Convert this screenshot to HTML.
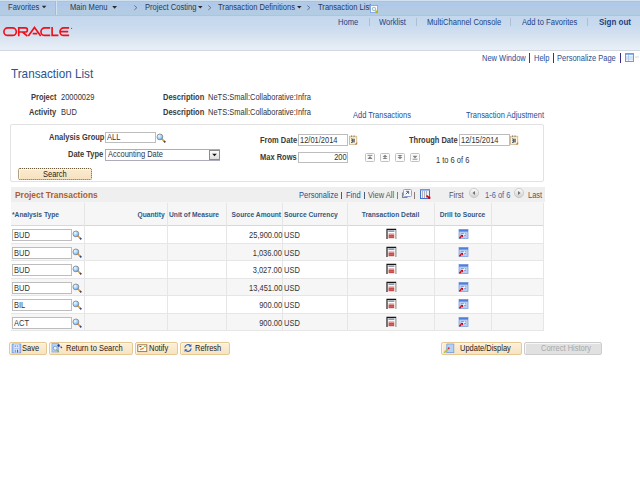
<!DOCTYPE html>
<html><head><meta charset="utf-8">
<style>
*{margin:0;padding:0;box-sizing:border-box}
html,body{width:640px;height:480px;overflow:hidden;background:#fff}
body{position:relative;font-family:"Liberation Sans",sans-serif;font-size:8.2px;color:#333}
.a{position:absolute;white-space:nowrap;line-height:1;transform:scaleX(0.915);transform-origin:0 0}
.ar{transform-origin:100% 0}
.ac{transform-origin:50% 0}
.b{font-weight:bold}
.crumb{color:#2b3a4f;font-size:8.3px}
.hl{color:#1c4384;font-size:8.3px}
.lnk{color:#1d4e98}
.lbl{font-weight:bold;color:#3a3a3a}
.inp{position:absolute;border:1px solid #bdbdbd;background:#fff}
.gl{position:absolute;background:#e6e6e6}
.hd{color:#35577f;font-weight:bold;font-size:7.3px}
.btn{position:absolute;height:13px;border:1px solid #e8c892;background:linear-gradient(#fcefd8,#f7e3c2);border-radius:2px;box-shadow:inset 1px 1px 0 #fff6e6}
.bt{color:#222}
</style></head><body>
<div style="position:absolute;left:0;top:0;width:640px;height:16px;background:linear-gradient(#d0e1ef 0,#d0e1ef 1px,#abc2da 1px,#abc2da 2px,#b4cae4 2px,#b4cae4 4px,#acc9ec 4px,#acc9ec 6px,#b1c9ea 6px,#b1c9ea 8.5px,#b5cbe4 8.5px,#b5cbe4 11px,#b2cce3 11px,#b2cce3 15px,#aac5df 15px)"></div>
<div style="position:absolute;left:0;top:16px;width:640px;height:34px;background:linear-gradient(#c4d7ec 0,#c8daee 9px,#d4e1f0 19px,#dfe8f3 26px,#e9eff7 34px)"></div>
<div style="position:absolute;left:0;top:50px;width:640px;height:1px;background:#d2d8df"></div>
<div style="position:absolute;left:55px;top:1px;width:1px;height:14px;background:#a3bcd6"></div>
<div style="position:absolute;left:56px;top:1px;width:1px;height:14px;background:#d3e2f1"></div>
<div class="a crumb" style="left:8px;top:3px;">Favorites</div>
<div class="a crumb" style="left:70px;top:3px;">Main Menu</div>
<div class="a crumb" style="left:145px;top:3px;">Project Costing</div>
<div class="a crumb" style="left:218px;top:3px;">Transaction Definitions</div>
<div class="a crumb" style="left:318px;top:3px;">Transaction List</div>
<svg style="position:absolute;left:0px;top:0px" width="640" height="15" viewBox="0 0 640 15" ><path d="M41.8 5.7h4.6l-2.3 2.6z M112.2 6h4.8l-2.4 2.7z M198 6h4.6l-2.3 2.6z M297 6h4.6l-2.3 2.6z" fill="#2a2a2a"/><path d="M134.3 5.5l2.6 2.2l-2.6 2.2 M208.3 5.5l2.6 2.2l-2.6 2.2 M307.3 5.5l2.6 2.2l-2.6 2.2" fill="none" stroke="#5b6d8c" stroke-width="0.9"/><rect x="370.5" y="5.5" width="7" height="7" fill="#fff" stroke="#7ea6e6" stroke-width="0.9"/><circle cx="374" cy="9" r="1.8" fill="#e8f2ff" stroke="#8aa" stroke-width="0.8"/><path d="M375.5 10.5l2.2 2.6" stroke="#c8b000" stroke-width="1.6"/></svg>
<svg style="position:absolute;left:0px;top:20px" width="80" height="20" viewBox="0 0 80 20" ><g fill="none" stroke="#f0101c" stroke-width="1.65" transform="translate(0,-20)"><rect x="3.9" y="27.9" width="12.4" height="7.5" rx="3.75"/><path d="M18.75 36.2V27.9h6.6a2.05 2.05 0 0 1 0 4.1h-5.8M22.6 32l4.8 4.1"/><path d="M28.3 36.1l6.2-8.6l6.2 8.6M32.7 33.6h4.6"/><path d="M50.2 27.9h-5.5a3.75 3.75 0 0 0 0 7.5h5.5"/><path d="M52.1 27.1v8.3h6.3"/><path d="M69.1 27.9h-5.4a3.75 3.75 0 0 0 0 7.5h5.4M60.8 31.65h7.4"/></g><circle cx="71.6" cy="8.3" r="0.6" fill="#ee1620"/></svg>
<div class="a hl" style="left:338px;top:18px;">Home</div>
<div class="a hl" style="left:379px;top:18px;">Worklist</div>
<div class="a hl" style="left:427px;top:18px;">MultiChannel Console</div>
<div class="a hl" style="left:522px;top:18px;">Add to Favorites</div>
<div class="a hl b" style="left:599px;top:18px;font-size:8.75px">Sign out</div>
<div style="position:absolute;left:369px;top:18px;width:1px;height:8px;background:#aebfd2"></div>
<div style="position:absolute;left:416px;top:18px;width:1px;height:8px;background:#aebfd2"></div>
<div style="position:absolute;left:510px;top:18px;width:1px;height:8px;background:#aebfd2"></div>
<div style="position:absolute;left:587px;top:18px;width:1px;height:8px;background:#aebfd2"></div>
<div class="a lnk" style="left:482px;top:55px;">New Window</div>
<div class="a lnk" style="left:534px;top:55px;">Help</div>
<div class="a lnk" style="left:557px;top:55px;">Personalize Page</div>
<div style="position:absolute;left:529px;top:53px;width:1px;height:10px;background:#8a2040"></div>
<div style="position:absolute;left:553px;top:53px;width:1px;height:10px;background:#4a2a88"></div>
<div style="position:absolute;left:620px;top:53px;width:1px;height:10px;background:#3a2a88"></div>
<svg style="position:absolute;left:624px;top:52px" width="16" height="11" viewBox="0 0 16 11" ><rect x="1.5" y="1.5" width="8" height="8" fill="#f2f6fd" stroke="#6a9ae3" stroke-width="1"/><rect x="1" y="1" width="9" height="1.8" fill="#6e9de6"/><path d="M2 5h7M2 7h7M4.5 3v6" stroke="#a9c4ee" stroke-width="0.8"/><path d="M11 5h4" stroke="#ccc" stroke-width="0.8"/></svg>
<div class="a " style="left:11px;top:68px;font-size:12.8px;color:#2b5390">Transaction List</div>
<div class="a lbl" style="left:31px;top:94px;">Project</div>
<div class="a " style="left:61px;top:94px;">20000029</div>
<div class="a lbl" style="left:163px;top:94px;">Description</div>
<div class="a " style="left:208px;top:94px;">NeTS:Small:Collaborative:Infra</div>
<div class="a lbl" style="left:29px;top:109px;">Activity</div>
<div class="a " style="left:61px;top:109px;">BUD</div>
<div class="a lbl" style="left:163px;top:109px;">Description</div>
<div class="a " style="left:208px;top:109px;">NeTS:Small:Collaborative:Infra</div>
<div class="a lnk" style="left:353px;top:112px;">Add Transactions</div>
<div class="a lnk" style="left:466px;top:112px;">Transaction Adjustment</div>
<div style="position:absolute;left:10px;top:124px;width:534px;height:58px;border:1px solid #e2e2e2;border-radius:2px"></div>
<div class="a lbl" style="left:49px;top:134px;">Analysis Group</div>
<div class="inp" style="left:105px;top:132px;width:51px;height:11px"></div>
<div class="a " style="left:107px;top:134px;">ALL</div>
<svg style="position:absolute;left:156px;top:133px" width="10" height="10" viewBox="0 0 10 10" ><defs><radialGradient id="mg" cx="0.35" cy="0.35" r="0.7"><stop offset="0" stop-color="#f4faff"/><stop offset="0.6" stop-color="#9fd0f8"/><stop offset="1" stop-color="#5a9fe0"/></radialGradient></defs><path d="M5.8 5.8l3.2 3.2" stroke="#e39a3a" stroke-width="1.7"/><path d="M8 8l1.3 1.3" stroke="#3a4a7a" stroke-width="1.7"/><circle cx="3.9" cy="3.9" r="2.9" fill="url(#mg)" stroke="#858d96" stroke-width="0.9"/></svg>
<div class="a lbl" style="left:68px;top:151px;">Date Type</div>
<div class="inp" style="left:105px;top:149px;width:115px;height:12px;border-color:#acacbc"></div>
<div class="a " style="left:108px;top:151px;">Accounting Date</div>
<svg style="position:absolute;left:209px;top:150px" width="11" height="10" viewBox="0 0 11 10" ><defs><linearGradient id="sg" x1="0" y1="0" x2="0" y2="1"><stop offset="0" stop-color="#fdfdfd"/><stop offset="1" stop-color="#dcdcdc"/></linearGradient></defs><rect x="0.5" y="0.5" width="10" height="9" fill="url(#sg)" stroke="#8c8c8c" stroke-width="1"/><path d="M3.2 3.8h4.6l-2.3 2.4z" fill="#111"/></svg>
<div class="btn" style="left:18px;top:168px;width:74px;height:12px;border:1px dotted #6e5a3c;background:linear-gradient(#fcebd0,#f7e2be)"></div>
<div class="a bt" style="left:43px;top:171px;">Search</div>
<div class="a lbl" style="left:260px;top:137px;">From Date</div>
<div class="inp" style="left:298px;top:134px;width:50px;height:12px"></div>
<div class="a " style="left:300px;top:137px;">12/01/2014</div>
<svg style="position:absolute;left:349px;top:135px" width="9" height="10" viewBox="0 0 9 10" ><rect x="0.5" y="1.3" width="7.2" height="8" fill="#fffbe6" stroke="#cbb58e" stroke-width="0.9"/><rect x="1" y="1.8" width="6.2" height="1.6" fill="#f8eab0"/><path d="M2.1 3.9h1.3v3.6h-1.3M2.3 5.7h1" fill="none" stroke="#3a4050" stroke-width="0.9"/><path d="M5 3.8v3.8" stroke="#1e1e28" stroke-width="1.1"/><path d="M2.6 0.4v1.6M5.1 0.4v1.6" stroke="#7a6a50" stroke-width="0.8"/><path d="M5.6 9.6l2.6-2.6v1.8l-0.8 0.8z" fill="#d46d1e"/></svg>
<div class="a lbl" style="left:260px;top:154px;">Max Rows</div>
<div class="inp" style="left:298px;top:152px;width:50px;height:11px"></div>
<div class="a ar " style="right:293px;top:154px;">200</div>
<div class="a lbl" style="left:409px;top:137px;">Through Date</div>
<div class="inp" style="left:459px;top:134px;width:51px;height:12px"></div>
<div class="a " style="left:461px;top:137px;">12/15/2014</div>
<svg style="position:absolute;left:510px;top:135px" width="9" height="10" viewBox="0 0 9 10" ><rect x="0.5" y="1.3" width="7.2" height="8" fill="#fffbe6" stroke="#cbb58e" stroke-width="0.9"/><rect x="1" y="1.8" width="6.2" height="1.6" fill="#f8eab0"/><path d="M2.1 3.9h1.3v3.6h-1.3M2.3 5.7h1" fill="none" stroke="#3a4050" stroke-width="0.9"/><path d="M5 3.8v3.8" stroke="#1e1e28" stroke-width="1.1"/><path d="M2.6 0.4v1.6M5.1 0.4v1.6" stroke="#7a6a50" stroke-width="0.8"/><path d="M5.6 9.6l2.6-2.6v1.8l-0.8 0.8z" fill="#d46d1e"/></svg>
<svg style="position:absolute;left:365px;top:153px" width="10" height="9" viewBox="0 0 10 9" ><rect x="0.5" y="0.5" width="9" height="8" rx="1" fill="#fbfbfb" stroke="#c2c2c2" stroke-width="1"/><path d="M2.6 2.4h4.8" stroke="#808080" stroke-width="0.9"/><path d="M5 3l2.5 2.9h-5z" fill="#808080"/></svg>
<svg style="position:absolute;left:380px;top:153px" width="10" height="9" viewBox="0 0 10 9" ><rect x="0.5" y="0.5" width="9" height="8" rx="1" fill="#fbfbfb" stroke="#c2c2c2" stroke-width="1"/><path d="M5 1.8l2.5 2.2h-5zM5 3.9l2.5 2.2h-5z" fill="#808080"/></svg>
<svg style="position:absolute;left:395px;top:153px" width="10" height="9" viewBox="0 0 10 9" ><rect x="0.5" y="0.5" width="9" height="8" rx="1" fill="#fbfbfb" stroke="#c2c2c2" stroke-width="1"/><path d="M5 4.1l2.5-2.2h-5zM5 6.2l2.5-2.2h-5z" fill="#808080"/></svg>
<svg style="position:absolute;left:410px;top:153px" width="10" height="9" viewBox="0 0 10 9" ><rect x="0.5" y="0.5" width="9" height="8" rx="1" fill="#fbfbfb" stroke="#c2c2c2" stroke-width="1"/><path d="M5 5.4l2.5-2.7h-5z" fill="#808080"/><path d="M2.6 6.2h4.8" stroke="#808080" stroke-width="0.9"/></svg>
<div class="a " style="left:436px;top:157px;">1 to 6 of 6</div>
<div style="position:absolute;left:11px;top:187px;width:534px;height:15px;background:#efefef"></div>
<div class="a b" style="left:15px;top:191px;color:#ad5f28;font-size:9.2px">Project Transactions</div>
<div class="a lnk" style="left:299px;top:192px;">Personalize</div>
<div style="position:absolute;left:341px;top:192px;width:1px;height:7px;background:#4a5a7a"></div><div style="position:absolute;left:364px;top:192px;width:1px;height:7px;background:#4a5a7a"></div>
<div class="a lnk" style="left:346px;top:192px;">Find</div>
<div class="a " style="left:368px;top:192px;color:#555">View All</div>
<div style="position:absolute;left:397px;top:192px;width:1px;height:7px;background:#8a7a78"></div><div style="position:absolute;left:414px;top:192px;width:1px;height:7px;background:#8a7a78"></div>
<div class="a " style="left:449px;top:192px;color:#555">First</div>
<div class="a " style="left:485px;top:192px;color:#3d68a8">1-6 of 6</div>
<div class="a " style="left:528px;top:192px;color:#555">Last</div>
<svg style="position:absolute;left:401px;top:188px" width="11" height="11" viewBox="0 0 11 11" ><path d="M1.5 4.5v5h5" fill="none" stroke="#7d8796" stroke-width="1.1"/><rect x="2.5" y="1.5" width="8" height="7" rx="1" fill="#f4f7fb" stroke="#8da4c6" stroke-width="1"/><path d="M4.8 6.2l2.6-2.6M5.2 3.4h2.4v2.4" fill="none" stroke="#4a5a72" stroke-width="0.9"/></svg>
<svg style="position:absolute;left:419px;top:188px" width="12" height="12" viewBox="0 0 12 12" ><rect x="1.5" y="1.5" width="9" height="9" fill="#eef1f6" stroke="#3f74d2" stroke-width="1"/><rect x="1" y="1" width="10" height="1.6" fill="#6a98e4"/><path d="M3.5 3v7M5.5 3v7M7.5 3v7" stroke="#aeb3bc" stroke-width="1"/><path d="M7.5 7.6l3.2 2.6" fill="none" stroke="#d00000" stroke-width="1.6"/><path d="M9 10.8h2.4v-2.4z" fill="#d00000"/></svg>
<svg style="position:absolute;left:469px;top:188px" width="10" height="10" viewBox="0 0 10 10" ><defs><linearGradient id="cg" x1="0" y1="0" x2="0" y2="1"><stop offset="0" stop-color="#fdfdfd"/><stop offset="1" stop-color="#d0d0d0"/></linearGradient></defs><circle cx="5" cy="5" r="4.6" fill="url(#cg)" stroke="#c4c4c4" stroke-width="0.8"/><path d="M6 3l-2.5 2l2.5 2z" fill="#707070"/></svg>
<svg style="position:absolute;left:514px;top:188px" width="10" height="10" viewBox="0 0 10 10" ><defs><linearGradient id="cg" x1="0" y1="0" x2="0" y2="1"><stop offset="0" stop-color="#fdfdfd"/><stop offset="1" stop-color="#d0d0d0"/></linearGradient></defs><circle cx="5" cy="5" r="4.6" fill="url(#cg)" stroke="#c4c4c4" stroke-width="0.8"/><path d="M4 3l2.5 2l-2.5 2z" fill="#707070"/></svg>
<div style="position:absolute;left:11px;top:202px;width:533px;height:23px;background:#f6f6f6"></div>
<div class="gl" style="left:11px;top:225px;width:533px;height:1px;background:#d8d8d8"></div>
<div style="position:absolute;left:11px;top:244px;width:533px;height:16px;background:#f6f6f6"></div>
<div style="position:absolute;left:11px;top:279px;width:533px;height:16px;background:#f6f6f6"></div>
<div style="position:absolute;left:11px;top:314px;width:533px;height:16px;background:#f6f6f6"></div>
<!--gridmark-->
<div class="gl" style="left:84px;top:203px;width:1px;height:128px"></div>
<div class="gl" style="left:167px;top:203px;width:1px;height:128px"></div>
<div class="gl" style="left:226px;top:203px;width:1px;height:128px"></div>
<div class="gl" style="left:282px;top:203px;width:1px;height:128px"></div>
<div class="gl" style="left:347px;top:203px;width:1px;height:128px"></div>
<div class="gl" style="left:434px;top:203px;width:1px;height:128px"></div>
<div class="gl" style="left:491px;top:203px;width:1px;height:128px"></div>
<div class="gl" style="left:543px;top:203px;width:1px;height:128px"></div>
<div class="a hd" style="left:12px;top:211px;">*Analysis Type</div>
<div class="a ar hd" style="right:475px;top:211px;">Quantity</div>
<div class="a hd" style="left:169px;top:211px;">Unit of Measure</div>
<div class="a ar hd" style="right:359px;top:211px;">Source Amount</div>
<div class="a hd" style="left:284px;top:211px;">Source Currency</div>
<div class="a ac hd" style="left:347px;width:87px;text-align:center;top:211px">Transaction Detail</div>
<div class="a ac hd" style="left:434px;width:57px;text-align:center;top:211px">Drill to Source</div>
<div class="gl" style="left:11px;top:243px;width:533px;height:1px"></div>
<div class="inp" style="left:12px;top:229px;width:60px;height:12px"></div>
<div class="a " style="left:14px;top:232px;">BUD</div>
<svg style="position:absolute;left:72px;top:230px" width="10" height="10" viewBox="0 0 10 10" ><defs><radialGradient id="mg" cx="0.35" cy="0.35" r="0.7"><stop offset="0" stop-color="#f4faff"/><stop offset="0.6" stop-color="#9fd0f8"/><stop offset="1" stop-color="#5a9fe0"/></radialGradient></defs><path d="M5.8 5.8l3.2 3.2" stroke="#e39a3a" stroke-width="1.7"/><path d="M8 8l1.3 1.3" stroke="#3a4a7a" stroke-width="1.7"/><circle cx="3.9" cy="3.9" r="2.9" fill="url(#mg)" stroke="#858d96" stroke-width="0.9"/></svg>
<div class="a ar " style="right:358px;top:232px;">25,900.00</div>
<div class="a " style="left:284px;top:232px;">USD</div>
<svg style="position:absolute;left:386px;top:228px" width="12" height="12" viewBox="0 0 12 12" ><path d="M1 11V1.4h9.2" fill="none" stroke="#161616" stroke-width="1.15"/><path d="M9.9 2v9" stroke="#8e8e8e" stroke-width="1.1"/><path d="M2.4 3.1h6" stroke="#364868" stroke-width="0.9"/><rect x="2.6" y="5.1" width="5.6" height="1.6" fill="#e8b4b4"/><rect x="2.6" y="6.6" width="5.6" height="3.6" fill="#c84a4a"/><path d="M2.6 8.4h5.6" stroke="#d87878" stroke-width="0.5"/></svg>
<svg style="position:absolute;left:458px;top:229px" width="11" height="10" viewBox="0 0 11 10" ><rect x="1" y="0.5" width="9" height="9" fill="#b8cdf0" stroke="#7fa0e0" stroke-width="0.8"/><rect x="1" y="0.6" width="9" height="2" fill="#4f7fd8"/><path d="M3 4.5h5M3 6.5h5" stroke="#7a98d8" stroke-width="0.8"/><path d="M7 4.5l-2 2" stroke="#f4f8ff" stroke-width="1.2"/><path d="M1.4 9.2l2-2" stroke="#d00000" stroke-width="1.3"/><path d="M2.4 6h2.6v2.6z" fill="#d00000"/></svg>
<div class="gl" style="left:11px;top:260px;width:533px;height:1px"></div>
<div class="inp" style="left:12px;top:247px;width:60px;height:12px"></div>
<div class="a " style="left:14px;top:250px;">BUD</div>
<svg style="position:absolute;left:72px;top:248px" width="10" height="10" viewBox="0 0 10 10" ><defs><radialGradient id="mg" cx="0.35" cy="0.35" r="0.7"><stop offset="0" stop-color="#f4faff"/><stop offset="0.6" stop-color="#9fd0f8"/><stop offset="1" stop-color="#5a9fe0"/></radialGradient></defs><path d="M5.8 5.8l3.2 3.2" stroke="#e39a3a" stroke-width="1.7"/><path d="M8 8l1.3 1.3" stroke="#3a4a7a" stroke-width="1.7"/><circle cx="3.9" cy="3.9" r="2.9" fill="url(#mg)" stroke="#858d96" stroke-width="0.9"/></svg>
<div class="a ar " style="right:358px;top:250px;">1,036.00</div>
<div class="a " style="left:284px;top:250px;">USD</div>
<svg style="position:absolute;left:386px;top:246px" width="12" height="12" viewBox="0 0 12 12" ><path d="M1 11V1.4h9.2" fill="none" stroke="#161616" stroke-width="1.15"/><path d="M9.9 2v9" stroke="#8e8e8e" stroke-width="1.1"/><path d="M2.4 3.1h6" stroke="#364868" stroke-width="0.9"/><rect x="2.6" y="5.1" width="5.6" height="1.6" fill="#e8b4b4"/><rect x="2.6" y="6.6" width="5.6" height="3.6" fill="#c84a4a"/><path d="M2.6 8.4h5.6" stroke="#d87878" stroke-width="0.5"/></svg>
<svg style="position:absolute;left:458px;top:247px" width="11" height="10" viewBox="0 0 11 10" ><rect x="1" y="0.5" width="9" height="9" fill="#b8cdf0" stroke="#7fa0e0" stroke-width="0.8"/><rect x="1" y="0.6" width="9" height="2" fill="#4f7fd8"/><path d="M3 4.5h5M3 6.5h5" stroke="#7a98d8" stroke-width="0.8"/><path d="M7 4.5l-2 2" stroke="#f4f8ff" stroke-width="1.2"/><path d="M1.4 9.2l2-2" stroke="#d00000" stroke-width="1.3"/><path d="M2.4 6h2.6v2.6z" fill="#d00000"/></svg>
<div class="gl" style="left:11px;top:278px;width:533px;height:1px"></div>
<div class="inp" style="left:12px;top:264px;width:60px;height:12px"></div>
<div class="a " style="left:14px;top:267px;">BUD</div>
<svg style="position:absolute;left:72px;top:265px" width="10" height="10" viewBox="0 0 10 10" ><defs><radialGradient id="mg" cx="0.35" cy="0.35" r="0.7"><stop offset="0" stop-color="#f4faff"/><stop offset="0.6" stop-color="#9fd0f8"/><stop offset="1" stop-color="#5a9fe0"/></radialGradient></defs><path d="M5.8 5.8l3.2 3.2" stroke="#e39a3a" stroke-width="1.7"/><path d="M8 8l1.3 1.3" stroke="#3a4a7a" stroke-width="1.7"/><circle cx="3.9" cy="3.9" r="2.9" fill="url(#mg)" stroke="#858d96" stroke-width="0.9"/></svg>
<div class="a ar " style="right:358px;top:267px;">3,027.00</div>
<div class="a " style="left:284px;top:267px;">USD</div>
<svg style="position:absolute;left:386px;top:263px" width="12" height="12" viewBox="0 0 12 12" ><path d="M1 11V1.4h9.2" fill="none" stroke="#161616" stroke-width="1.15"/><path d="M9.9 2v9" stroke="#8e8e8e" stroke-width="1.1"/><path d="M2.4 3.1h6" stroke="#364868" stroke-width="0.9"/><rect x="2.6" y="5.1" width="5.6" height="1.6" fill="#e8b4b4"/><rect x="2.6" y="6.6" width="5.6" height="3.6" fill="#c84a4a"/><path d="M2.6 8.4h5.6" stroke="#d87878" stroke-width="0.5"/></svg>
<svg style="position:absolute;left:458px;top:264px" width="11" height="10" viewBox="0 0 11 10" ><rect x="1" y="0.5" width="9" height="9" fill="#b8cdf0" stroke="#7fa0e0" stroke-width="0.8"/><rect x="1" y="0.6" width="9" height="2" fill="#4f7fd8"/><path d="M3 4.5h5M3 6.5h5" stroke="#7a98d8" stroke-width="0.8"/><path d="M7 4.5l-2 2" stroke="#f4f8ff" stroke-width="1.2"/><path d="M1.4 9.2l2-2" stroke="#d00000" stroke-width="1.3"/><path d="M2.4 6h2.6v2.6z" fill="#d00000"/></svg>
<div class="gl" style="left:11px;top:295px;width:533px;height:1px"></div>
<div class="inp" style="left:12px;top:282px;width:60px;height:12px"></div>
<div class="a " style="left:14px;top:285px;">BUD</div>
<svg style="position:absolute;left:72px;top:283px" width="10" height="10" viewBox="0 0 10 10" ><defs><radialGradient id="mg" cx="0.35" cy="0.35" r="0.7"><stop offset="0" stop-color="#f4faff"/><stop offset="0.6" stop-color="#9fd0f8"/><stop offset="1" stop-color="#5a9fe0"/></radialGradient></defs><path d="M5.8 5.8l3.2 3.2" stroke="#e39a3a" stroke-width="1.7"/><path d="M8 8l1.3 1.3" stroke="#3a4a7a" stroke-width="1.7"/><circle cx="3.9" cy="3.9" r="2.9" fill="url(#mg)" stroke="#858d96" stroke-width="0.9"/></svg>
<div class="a ar " style="right:358px;top:285px;">13,451.00</div>
<div class="a " style="left:284px;top:285px;">USD</div>
<svg style="position:absolute;left:386px;top:281px" width="12" height="12" viewBox="0 0 12 12" ><path d="M1 11V1.4h9.2" fill="none" stroke="#161616" stroke-width="1.15"/><path d="M9.9 2v9" stroke="#8e8e8e" stroke-width="1.1"/><path d="M2.4 3.1h6" stroke="#364868" stroke-width="0.9"/><rect x="2.6" y="5.1" width="5.6" height="1.6" fill="#e8b4b4"/><rect x="2.6" y="6.6" width="5.6" height="3.6" fill="#c84a4a"/><path d="M2.6 8.4h5.6" stroke="#d87878" stroke-width="0.5"/></svg>
<svg style="position:absolute;left:458px;top:282px" width="11" height="10" viewBox="0 0 11 10" ><rect x="1" y="0.5" width="9" height="9" fill="#b8cdf0" stroke="#7fa0e0" stroke-width="0.8"/><rect x="1" y="0.6" width="9" height="2" fill="#4f7fd8"/><path d="M3 4.5h5M3 6.5h5" stroke="#7a98d8" stroke-width="0.8"/><path d="M7 4.5l-2 2" stroke="#f4f8ff" stroke-width="1.2"/><path d="M1.4 9.2l2-2" stroke="#d00000" stroke-width="1.3"/><path d="M2.4 6h2.6v2.6z" fill="#d00000"/></svg>
<div class="gl" style="left:11px;top:313px;width:533px;height:1px"></div>
<div class="inp" style="left:12px;top:299px;width:60px;height:12px"></div>
<div class="a " style="left:14px;top:302px;">BIL</div>
<svg style="position:absolute;left:72px;top:300px" width="10" height="10" viewBox="0 0 10 10" ><defs><radialGradient id="mg" cx="0.35" cy="0.35" r="0.7"><stop offset="0" stop-color="#f4faff"/><stop offset="0.6" stop-color="#9fd0f8"/><stop offset="1" stop-color="#5a9fe0"/></radialGradient></defs><path d="M5.8 5.8l3.2 3.2" stroke="#e39a3a" stroke-width="1.7"/><path d="M8 8l1.3 1.3" stroke="#3a4a7a" stroke-width="1.7"/><circle cx="3.9" cy="3.9" r="2.9" fill="url(#mg)" stroke="#858d96" stroke-width="0.9"/></svg>
<div class="a ar " style="right:358px;top:302px;">900.00</div>
<div class="a " style="left:284px;top:302px;">USD</div>
<svg style="position:absolute;left:386px;top:298px" width="12" height="12" viewBox="0 0 12 12" ><path d="M1 11V1.4h9.2" fill="none" stroke="#161616" stroke-width="1.15"/><path d="M9.9 2v9" stroke="#8e8e8e" stroke-width="1.1"/><path d="M2.4 3.1h6" stroke="#364868" stroke-width="0.9"/><rect x="2.6" y="5.1" width="5.6" height="1.6" fill="#e8b4b4"/><rect x="2.6" y="6.6" width="5.6" height="3.6" fill="#c84a4a"/><path d="M2.6 8.4h5.6" stroke="#d87878" stroke-width="0.5"/></svg>
<svg style="position:absolute;left:458px;top:299px" width="11" height="10" viewBox="0 0 11 10" ><rect x="1" y="0.5" width="9" height="9" fill="#b8cdf0" stroke="#7fa0e0" stroke-width="0.8"/><rect x="1" y="0.6" width="9" height="2" fill="#4f7fd8"/><path d="M3 4.5h5M3 6.5h5" stroke="#7a98d8" stroke-width="0.8"/><path d="M7 4.5l-2 2" stroke="#f4f8ff" stroke-width="1.2"/><path d="M1.4 9.2l2-2" stroke="#d00000" stroke-width="1.3"/><path d="M2.4 6h2.6v2.6z" fill="#d00000"/></svg>
<div class="gl" style="left:11px;top:330px;width:533px;height:1px"></div>
<div class="inp" style="left:12px;top:317px;width:60px;height:12px"></div>
<div class="a " style="left:14px;top:320px;">ACT</div>
<svg style="position:absolute;left:72px;top:318px" width="10" height="10" viewBox="0 0 10 10" ><defs><radialGradient id="mg" cx="0.35" cy="0.35" r="0.7"><stop offset="0" stop-color="#f4faff"/><stop offset="0.6" stop-color="#9fd0f8"/><stop offset="1" stop-color="#5a9fe0"/></radialGradient></defs><path d="M5.8 5.8l3.2 3.2" stroke="#e39a3a" stroke-width="1.7"/><path d="M8 8l1.3 1.3" stroke="#3a4a7a" stroke-width="1.7"/><circle cx="3.9" cy="3.9" r="2.9" fill="url(#mg)" stroke="#858d96" stroke-width="0.9"/></svg>
<div class="a ar " style="right:358px;top:320px;">900.00</div>
<div class="a " style="left:284px;top:320px;">USD</div>
<svg style="position:absolute;left:386px;top:316px" width="12" height="12" viewBox="0 0 12 12" ><path d="M1 11V1.4h9.2" fill="none" stroke="#161616" stroke-width="1.15"/><path d="M9.9 2v9" stroke="#8e8e8e" stroke-width="1.1"/><path d="M2.4 3.1h6" stroke="#364868" stroke-width="0.9"/><rect x="2.6" y="5.1" width="5.6" height="1.6" fill="#e8b4b4"/><rect x="2.6" y="6.6" width="5.6" height="3.6" fill="#c84a4a"/><path d="M2.6 8.4h5.6" stroke="#d87878" stroke-width="0.5"/></svg>
<svg style="position:absolute;left:458px;top:317px" width="11" height="10" viewBox="0 0 11 10" ><rect x="1" y="0.5" width="9" height="9" fill="#b8cdf0" stroke="#7fa0e0" stroke-width="0.8"/><rect x="1" y="0.6" width="9" height="2" fill="#4f7fd8"/><path d="M3 4.5h5M3 6.5h5" stroke="#7a98d8" stroke-width="0.8"/><path d="M7 4.5l-2 2" stroke="#f4f8ff" stroke-width="1.2"/><path d="M1.4 9.2l2-2" stroke="#d00000" stroke-width="1.3"/><path d="M2.4 6h2.6v2.6z" fill="#d00000"/></svg>
<div class="btn" style="left:9px;top:342px;width:38px"></div>
<div class="a bt" style="left:22px;top:345px;">Save</div>
<div class="btn" style="left:49px;top:342px;width:84px"></div>
<div class="a bt" style="left:66px;top:345px;">Return to Search</div>
<div class="btn" style="left:135px;top:342px;width:43px"></div>
<div class="a bt" style="left:149px;top:345px;">Notify</div>
<div class="btn" style="left:180px;top:342px;width:50px"></div>
<div class="a bt" style="left:195px;top:345px;">Refresh</div>
<div class="btn" style="left:441px;top:342px;width:81px"></div>
<div class="a bt" style="left:460px;top:345px;">Update/Display</div>
<div class="btn" style="left:524px;top:342px;width:78px;background:#e1e1e1;border-color:#cdcdcd"></div>
<div class="a " style="left:541px;top:345px;color:#a8a8a8">Correct History</div>
<svg style="position:absolute;left:11px;top:343px" width="11" height="11" viewBox="0 0 11 11" ><rect x="1.2" y="1" width="8.6" height="8.8" fill="#b2cbf2" stroke="#6f9be4" stroke-width="0.8"/><rect x="3" y="1.4" width="5" height="3.4" fill="#e2ecfb"/><rect x="3.6" y="2.3" width="1.4" height="1.6" fill="#7ea6e6"/><rect x="5.8" y="2.3" width="1.4" height="1.6" fill="#7ea6e6"/><rect x="3" y="6" width="5" height="3.6" fill="#eef3fc"/><rect x="3.6" y="6.6" width="1.6" height="3" fill="#7da0e0"/><rect x="6" y="6.6" width="1.2" height="3" fill="#2a66c8"/></svg>
<svg style="position:absolute;left:50px;top:343px" width="13" height="11" viewBox="0 0 13 11" ><rect x="2" y="0.6" width="6.5" height="8.4" fill="#b9d3f6" stroke="#7aa5ea" stroke-width="0.7"/><circle cx="5.2" cy="5.2" r="2" fill="#e8f2ff" stroke="#7090b8" stroke-width="0.8"/><path d="M6.7 6.7l2 2.5" stroke="#8fae2c" stroke-width="1.3"/><path d="M8.6 2.6l2.8 1.8" stroke="#8090a8" stroke-width="0.8"/><circle cx="8.6" cy="2.5" r="1.2" fill="#1f3f8f"/><circle cx="11.4" cy="4.4" r="0.8" fill="#2a4a9a"/></svg>
<svg style="position:absolute;left:137px;top:344px" width="11" height="9" viewBox="0 0 11 9" ><rect x="0.8" y="0.8" width="9" height="6.8" fill="#fffdf6" stroke="#9a7040" stroke-width="0.9"/><path d="M2.4 2.6h2" stroke="#333" stroke-width="0.9"/><path d="M3 5.6c1.5-0.2 2.8-0.9 3.8-1.8" stroke="#e08a30" stroke-width="1.3" fill="none"/><path d="M7.2 2.6h1.4" stroke="#3aa040" stroke-width="0.9"/></svg>
<svg style="position:absolute;left:183px;top:343px" width="10" height="10" viewBox="0 0 10 10" ><path d="M1.8 4.6a3.3 3.3 0 0 1 5.8-1.8" fill="none" stroke="#2a5fb8" stroke-width="1.1"/><path d="M8.4 1v2.8h-2.8z" fill="#2a5fb8"/><path d="M8.2 5.4a3.3 3.3 0 0 1-5.8 1.8" fill="none" stroke="#2a5fb8" stroke-width="1.1"/><path d="M1.6 9v-2.8h2.8z" fill="#2a5fb8"/></svg>
<svg style="position:absolute;left:443px;top:343px" width="12" height="11" viewBox="0 0 12 11" ><rect x="3.8" y="1" width="7" height="8.6" fill="#b7d1f5" stroke="#6f9de3" stroke-width="0.8"/><path d="M1.2 9.8l4.4-4.4" stroke="#b0c040" stroke-width="1.6"/><path d="M5.2 5.8l1.2-1.2" stroke="#e02020" stroke-width="1.6"/></svg>
</body></html>
